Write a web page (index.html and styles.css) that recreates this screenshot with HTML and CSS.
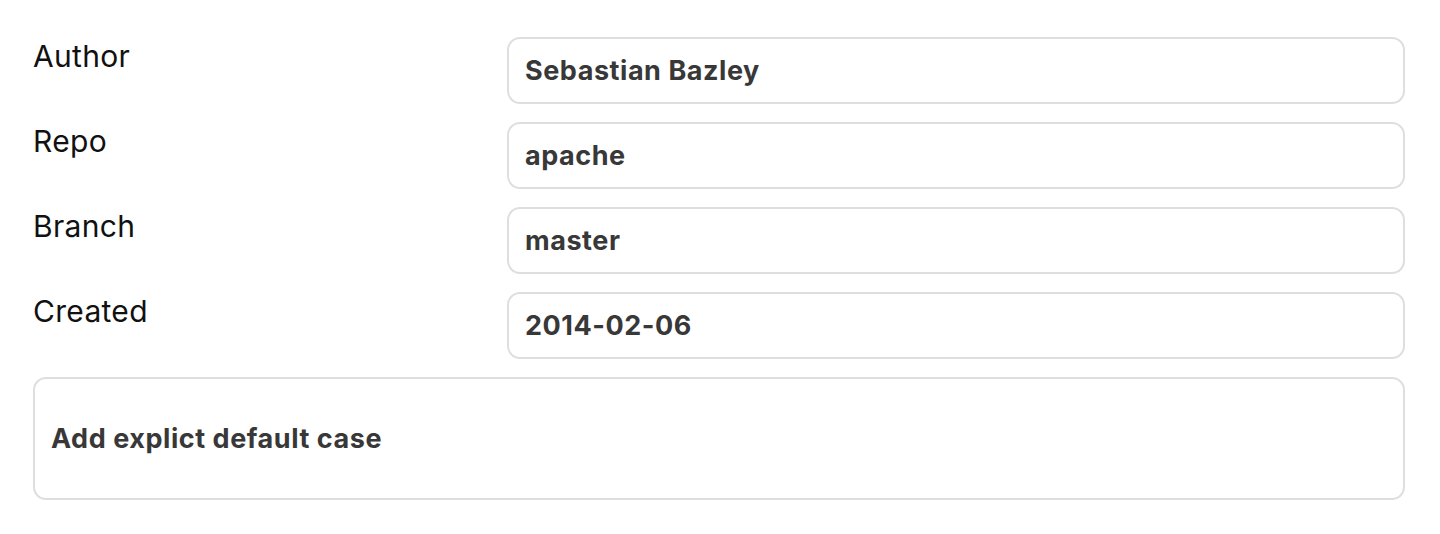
FILE: index.html
```html
<!DOCTYPE html>
<html lang="en">
<head>
<meta charset="utf-8">
<title>Commit</title>
<link rel="stylesheet" href="styles.css">
</head>
<body>
<main class="details">
  <div class="grid">
    <div class="label">Author</div>
    <div class="field">Sebastian Bazley</div>
    <div class="label">Repo</div>
    <div class="field">apache</div>
    <div class="label">Branch</div>
    <div class="field">master</div>
    <div class="label">Created</div>
    <div class="field">2014-02-06</div>
  </div>
  <div class="message">Add explict default case</div>
</main>
</body>
</html>
```
FILE: styles.css
```css
html, body {
  margin: 0;
  padding: 0;
  background: #fff;
}
.details {
  padding: 37px 35px 0 33px;
  display: flex;
  flex-direction: column;
  gap: 18px;
}
.grid {
  display: grid;
  grid-template-columns: 474px 1fr;
  row-gap: 18px;
}
.label {
  font-family: Inter, "Noto Sans", sans-serif;
  font-size: 30px;
  letter-spacing: 0.3px;
  color: #111;
  line-height: 38px;
}
.field, .message {
  font-family: Inter, "Liberation Sans", sans-serif;
  font-weight: 700;
  font-size: 27px;
  letter-spacing: 0.55px;
  color: #383838;
  border: 2px solid #dedede;
  border-radius: 13px;
  box-sizing: border-box;
  display: flex;
  align-items: center;
  padding: 0 16px;
}
.field {
  height: 67px;
}
.message {
  height: 123px;
}
```
